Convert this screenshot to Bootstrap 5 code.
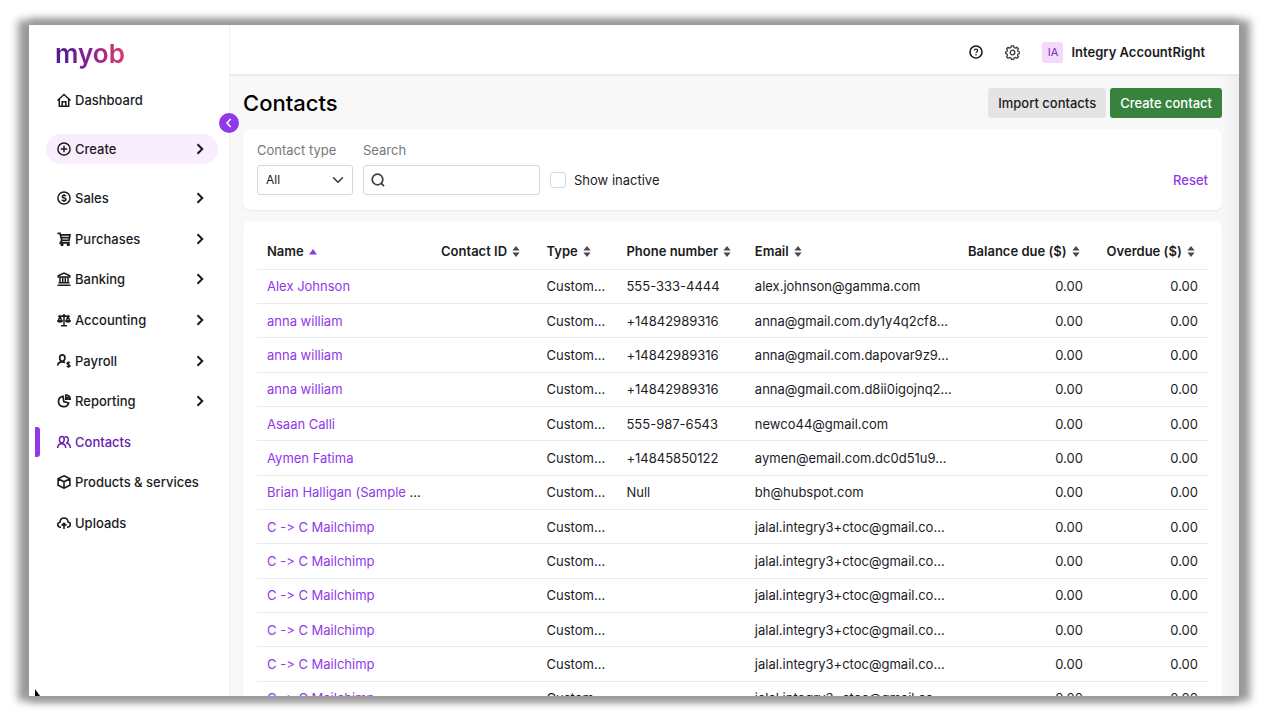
<!DOCTYPE html>
<html lang="en">
<head>
<meta charset="utf-8">
<meta name="viewport" content="width=device-width, initial-scale=1">
<title>Contacts - MYOB</title>
<link href="https://cdn.jsdelivr.net/npm/bootstrap@5.3.0/dist/css/bootstrap.min.css" rel="stylesheet">
<style>
  :root { --purple: #9138e8; --ink: #1b1b1f; --line: #ebebed; }
  body { font-family: Inter, "Liberation Sans", sans-serif; font-size: 13px; line-height: 20px; font-variant-ligatures: none; color: var(--ink); background: #fff; overflow: hidden; }
  .app-window { height: calc(100vh - 49px); margin: 25px 27px 24px 29px; background: #fff; position: relative;
    box-shadow: -6px 0 8px 5px #999, 6px 0 8px 5px #999; }
  a { text-decoration: none; }
  svg { flex: none; }

  /* sidebar */
  .side { width: 200px; flex: none; position: relative; }
  .brand { height: 60px; padding: 12px 0 0 26px; font-size: 26px; line-height: 34px; font-weight: 600; }
  .brand a { display: inline-block; color: transparent; background: linear-gradient(90deg, #4a1a94, #8c1f94 50%, #e23a6c); -webkit-background-clip: text; background-clip: text; }
  .side-link { display: flex; align-items: center; gap: 4px; width: 100%; height: 30px; padding: 0 14px 0 11px; border: 0; background: none; color: var(--ink); font-weight: 500; position: relative; text-align: left; }
  .side-link .arrow { margin-left: auto; }
  .side-body { padding: 0 11px 0 17px; }
  .create { background: #f8eefe; border-radius: 15px; margin: 19px 0 14px; }
  .menu { height: 365px; }
  .menu li { display: flex; align-items: center; flex: 1 1 0; }
  .side-link.active { color: #6620b0; }
  .side-link.active::before { content: ""; position: absolute; left: -11px; top: 0; width: 5px; height: 30px; background: var(--purple); border-radius: 0 3px 3px 0; }
  .collapse-btn { position: absolute; right: -10px; top: 88px; width: 20px; height: 20px; padding: 0; border: 0; border-radius: 50%; background: var(--purple); color: #fff; display: grid; place-items: center; z-index: 2; }
  .pointer { position: absolute; left: 6px; bottom: 0; }

  /* main area */
  .content { background: linear-gradient(90deg, #f8f8f8 calc(100% - 17px), #eee); border-left: 1px solid #f1f1f2; min-width: 0; }
  .topbar { height: 50px; padding: 5px 34px 0 0; background: #fff; border-bottom: 1px solid #e9e9ea; box-shadow: 0 1px 2px #0000000d; }
  .icon-btn { display: grid; place-items: center; width: 15px; height: 20px; margin-right: 22px; padding: 0; border: 0; background: none; color: var(--ink); }
  .avatar { width: 21px; height: 21px; border-radius: 3px; background: #f3dafb; color: #7a30b8; font-size: 11px; display: grid; place-items: center; }
  .page { padding: 13px 17px 0 13px; }
  .page h1 { font-size: 22px; line-height: 30px; font-weight: 500; color: #000; }
  .act { height: 30px; padding: 0 10px; border: 0; border-radius: 3px; font-size: 13px; line-height: 30px; font-weight: 500; }
  .act-grey, .act-grey:hover { background: #e4e4e4; color: var(--ink); }
  .act-green, .act-green:hover { background: #37833d; color: #fff; }
  .panel { background: #fff; border-radius: 7px; box-shadow: 0 1px 2px #00000012; margin-top: 11px; padding: 14px; }
  .panel label { color: #77777c; }
  .filters { padding: 11px 14px 15px; gap: 10px; }
  .filters label { display: block; margin-bottom: 5px; }
  .field, .field:focus { height: 30px; padding: 0 8px; border: 1px solid #d6d6d9; border-radius: 3px; font-size: 12px; line-height: 20px; color: var(--ink); box-shadow: none; }
  .type-field { width: 96px; background-size: 12px 12px; background-position: right 8px center; }
  .search-box { width: 177px; position: relative; }
  .search-box .field { width: 100%; padding-left: 28px; }
  .search-box svg { position: absolute; left: 8px; top: 8px; }
  .tick { height: 30px; }
  .tick .form-check-input { width: 16px; height: 16px; margin: 0; border-color: #d6d6d9; }
  .filters .tick label { margin: 0; color: var(--ink); }
  .purple, .purple:hover { color: var(--purple); }
  .reset { height: 30px; padding: 0; border: 0; background: none; font-weight: 500; }

  /* contact list */
  .list-panel { padding: 13px 14px; }
  .contacts { table-layout: fixed; width: 100%; height: 482px; margin: 0; color: var(--ink); }
  .contacts th, .contacts td { padding: 0 10px; border-bottom: 1px solid var(--line); white-space: nowrap; vertical-align: middle; }
  .contacts th { height: 35px; font-weight: 600; }
  .contacts th svg { margin: -2px 0 0 2px; }
  .contacts .num { text-align: right; }
  .contacts th.num { padding-right: 13px; }
  .c-name { width: 18.3%; } .c-id { width: 11.1%; } .c-type { width: 8.4%; } .c-phone { width: 13.5%; }
  .c-email { width: 22.1%; } .c-bal { width: 14.5%; } .c-over { width: 12.1%; }
</style>
</head>
<body>
<svg width="0" height="0" class="position-absolute" aria-hidden="true">
  <symbol id="arrow" viewBox="0 0 8 12"><path d="M1.5 1.2 6.3 6l-4.8 4.8" fill="none" stroke="currentColor" stroke-width="2"/></symbol>
  <symbol id="sort" viewBox="0 0 8 12"><path d="M4 0 8 5H0zM4 12 0 7h8z" fill="#4a4a50"/></symbol>
</svg>

<div class="app-window d-flex">
  <nav class="side" aria-label="Main">
    <div class="brand"><a href="#">myob</a></div>
    <div class="side-body">
      <a class="side-link" href="#"><svg width="14" height="14" viewBox="0 0 14 14" fill="none" stroke="currentColor" stroke-width="1.5"><path d="M.5 7.500 7 1.500 13.500 7.500M2.300 6.200v7h9.400v-7M5.200 13V8.800h3.600V13"/></svg>Dashboard</a>
      <button class="side-link create" type="button"><svg width="14" height="14" viewBox="0 0 14 14" fill="none" stroke="currentColor" stroke-width="1.5"><circle cx="7" cy="7" r="6.1"/><path d="M7 3.7v6.6M3.7 7h6.6"/></svg>Create<svg class="arrow" width="8" height="12"><use href="#arrow"/></svg></button>
      <ul class="menu list-unstyled d-flex flex-column mb-0">
        <li><button class="side-link" type="button"><svg width="14" height="14" viewBox="0 0 14 14" fill="none" stroke="currentColor" stroke-width="1.5"><circle cx="7" cy="7" r="6.1"/><path d="M9 5.1C8.600 4.300 5.200 3.900 5.200 5.700S9 6.700 9 8.400 5.400 9.800 4.900 8.700M7 3v1.500M7 9.500V11" stroke-width="1.500"/></svg>Sales<svg class="arrow" width="8" height="12"><use href="#arrow"/></svg></button></li>
        <li><button class="side-link" type="button"><svg width="14" height="14" viewBox="0 0 14 14" fill="none" stroke="currentColor" stroke-width="1.700"><path d="M.5 1.300H3L4.800 8.300H12l1-5.500H3.500M4.500 5.600h7.800M4.700 8.500 3.300 10.800H12.800"/><circle cx="5" cy="12.600" r=".8"/><circle cx="11.300" cy="12.600" r=".8"/></svg>Purchases<svg class="arrow" width="8" height="12"><use href="#arrow"/></svg></button></li>
        <li><button class="side-link" type="button"><svg width="14" height="14" viewBox="0 0 14 14" fill="none" stroke="currentColor" stroke-width="1.500"><path d="M1.200 5V3.700L7 1l5.800 2.700V5zM3 5.500v5M5.700 5.500v5M8.300 5.500v5M11 5.500v5M1.500 10.800h11M.5 13.200h13"/></svg>Banking<svg class="arrow" width="8" height="12"><use href="#arrow"/></svg></button></li>
        <li><button class="side-link" type="button"><svg width="14" height="14" viewBox="0 0 14 14" fill="none" stroke="currentColor" stroke-width="1.500"><path d="M7 1v11.500M4 12.700h6M1.200 3.300h3.300L7 2.500l2.500.8h3.300M3 3.300 1.200 8h3.600zM11 3.300 9.200 8h3.600z"/><path d="M.2 7.200h5.600a2.800 2.500 0 0 1-5.600 0zM8.200 7.200h5.600a2.800 2.500 0 0 1-5.600 0z" fill="currentColor" stroke="none"/></svg>Accounting<svg class="arrow" width="8" height="12"><use href="#arrow"/></svg></button></li>
        <li><button class="side-link" type="button"><svg width="14" height="14" viewBox="0 0 14 14" fill="none" stroke="currentColor" stroke-width="1.700"><path d="M.8 11.500c0-2.600 1.700-3.700 4.400-3.700 1.200 0 2.100.2 2.800.7M5.200 7.500C1.700 6.500 2 .9 5.300.9s3.700 5.500-.1 6.600z"/><path d="M13 8.900c-.7-.8-3-.8-3 .6s3 .8 3 2.200-2.500 1.500-3.200.5M11.500 7.500v6.300" stroke-width="1.400"/></svg>Payroll<svg class="arrow" width="8" height="12"><use href="#arrow"/></svg></button></li>
        <li><button class="side-link" type="button"><svg width="14" height="14" viewBox="0 0 14 14" fill="none" stroke="currentColor" stroke-width="1.700"><path d="M6 2.300A5.200 5.200 0 1 0 11.700 9L6.800 7.500z"/><path d="M8.800 1v4.200h4.400A4.300 4.300 0 0 0 8.800 1zM9 5l2.700-2.600"/></svg>Reporting<svg class="arrow" width="8" height="12"><use href="#arrow"/></svg></button></li>
        <li><a class="side-link active" href="#" aria-current="page"><svg width="14" height="14" viewBox="0 0 14 14" fill="none" stroke="currentColor" stroke-width="1.500"><path d="M.7 13c0-2.800 1.300-4.300 4-4.300s4 1.500 4 4.300M4.700 8.200C1.500 7 1.900 1.600 4.900 1.600s3.200 5.400-.2 6.600zM7.600 2c4-1.800 5 4.700 1.700 6.200 2.700.1 4 2 4 4.800"/></svg>Contacts</a></li>
        <li><a class="side-link" href="#"><svg width="14" height="14" viewBox="0 0 14 14" fill="none" stroke="currentColor" stroke-width="1.600"><path d="M7 .8l5.900 3v6.400L7 13.200l-5.900-3V3.800zM1.500 4 7 6.800 12.500 4M7 6.800V13"/></svg>Products &amp; services</a></li>
        <li><a class="side-link" href="#"><svg width="14" height="14" viewBox="0 0 14 14" fill="none" stroke="currentColor" stroke-width="1.600"><path d="M4 11.200C0 11.500-.3 6.600 3 6.200 3.300.4 10.800.7 11 6c3.500.6 2.900 5.300-1 5.200M7 13V7.500M4.600 9.600 7 7.300l2.400 2.300"/></svg>Uploads</a></li>
      </ul>
    </div>
    <button class="collapse-btn" type="button" aria-label="Collapse menu"><svg width="8" height="10" viewBox="0 0 8 10" fill="none" stroke="currentColor" stroke-width="1.600"><path d="M5.700 1 2 5l3.700 4"/></svg></button>
    <svg class="pointer" width="5" height="7" viewBox="0 0 5 7"><path d="M0 0v7h5z" fill="#000"/></svg>
  </nav>

  <div class="content flex-fill overflow-hidden">
    <header class="topbar d-flex align-items-center justify-content-end">
      <button class="icon-btn" type="button" aria-label="Help"><svg width="14" height="14" viewBox="0 0 14 14" fill="none" stroke="currentColor" stroke-width="1.600"><circle cx="7" cy="7" r="6"/><path d="M5.300 5.500c.1-2 3.400-1.900 3.400 0C8.700 6.700 7 6.700 7 8.100M7 9v1.400" stroke-width="1.200"/></svg></button>
      <button class="icon-btn" type="button" aria-label="Settings"><svg width="15" height="15" viewBox="0 0 15 15" fill="none" stroke="#3b3b40" stroke-width="1.300"><path d="M6.400.8h2.200l.5 1.700 1.200.5 1.600-.8 1.500 1.500-.8 1.600.5 1.200 1.700.5v1.500l-1.700.5-.5 1.200.8 1.600-1.500 1.500-1.600-.8-1.200.5-.5 1.300H6.400l-.5-1.300-1.200-.5-1.600.8-1.500-1.500.8-1.600L1.900 9 .7 8.500V7l1.200-.5.5-1.200-.8-1.600 1.500-1.500 1.600.8 1.200-.5z"/><circle cx="7.500" cy="7.500" r="2.300"/></svg></button>
      <span class="avatar me-2">IA</span>
      <span class="fw-semibold">Integry AccountRight</span>
    </header>

    <main class="page">
      <div class="d-flex align-items-center">
        <h1 class="mb-0 me-auto">Contacts</h1>
        <button class="btn act act-grey" type="button">Import contacts</button>
        <button class="btn act act-green ms-1" type="button">Create contact</button>
      </div>

      <form class="panel filters d-flex align-items-end">
        <div>
          <label for="type">Contact type</label>
          <select id="type" class="form-select field type-field"><option>All</option></select>
        </div>
        <div>
          <label for="search">Search</label>
          <div class="search-box">
            <input id="search" type="text" class="form-control field">
            <svg width="14" height="14" viewBox="0 0 14 14" fill="none" stroke="#3b3b40" stroke-width="1.700"><circle cx="6.500" cy="6.500" r="5.300"/><path d="m9.800 9.800 3.200 3.400"/></svg>
          </div>
        </div>
        <div class="tick d-flex align-items-center gap-2">
          <input class="form-check-input" type="checkbox" id="inactive">
          <label for="inactive">Show inactive</label>
        </div>
        <button class="reset purple ms-auto" type="reset">Reset</button>
      </form>

      <section class="panel list-panel">
        <table class="contacts">
          <thead><tr>
            <th class="c-name" scope="col">Name <svg width="8" height="6" viewBox="0 0 8 6"><path d="M4 0l4 5.500H0z" fill="#9138e8"/></svg></th>
            <th class="c-id" scope="col">Contact ID <svg width="8" height="11"><use href="#sort"/></svg></th>
            <th class="c-type" scope="col">Type <svg width="8" height="11"><use href="#sort"/></svg></th>
            <th class="c-phone" scope="col">Phone number <svg width="8" height="11"><use href="#sort"/></svg></th>
            <th class="c-email" scope="col">Email <svg width="8" height="11"><use href="#sort"/></svg></th>
            <th class="c-bal num" scope="col">Balance due ($) <svg width="8" height="11"><use href="#sort"/></svg></th>
            <th class="c-over num" scope="col">Overdue ($) <svg width="8" height="11"><use href="#sort"/></svg></th>
          </tr></thead>
          <tbody>
            <tr><td><a class="purple" href="#">Alex Johnson</a></td><td></td><td>Custom...</td><td>555-333-4444</td><td>alex.johnson@gamma.com</td><td class="num">0.00</td><td class="num">0.00</td></tr>
            <tr><td><a class="purple" href="#">anna william</a></td><td></td><td>Custom...</td><td>+14842989316</td><td>anna@gmail.com.dy1y4q2cf8...</td><td class="num">0.00</td><td class="num">0.00</td></tr>
            <tr><td><a class="purple" href="#">anna william</a></td><td></td><td>Custom...</td><td>+14842989316</td><td>anna@gmail.com.dapovar9z9...</td><td class="num">0.00</td><td class="num">0.00</td></tr>
            <tr><td><a class="purple" href="#">anna william</a></td><td></td><td>Custom...</td><td>+14842989316</td><td>anna@gmail.com.d8ii0igojnq2...</td><td class="num">0.00</td><td class="num">0.00</td></tr>
            <tr><td><a class="purple" href="#">Asaan Calli</a></td><td></td><td>Custom...</td><td>555-987-6543</td><td>newco44@gmail.com</td><td class="num">0.00</td><td class="num">0.00</td></tr>
            <tr><td><a class="purple" href="#">Aymen Fatima</a></td><td></td><td>Custom...</td><td>+14845850122</td><td>aymen@email.com.dc0d51u9...</td><td class="num">0.00</td><td class="num">0.00</td></tr>
            <tr><td><a class="purple" href="#">Brian Halligan (Sample</a> ...</td><td></td><td>Custom...</td><td>Null</td><td>bh@hubspot.com</td><td class="num">0.00</td><td class="num">0.00</td></tr>
            <tr><td><a class="purple" href="#">C -&gt; C Mailchimp</a></td><td></td><td>Custom...</td><td></td><td>jalal.integry3+ctoc@gmail.co...</td><td class="num">0.00</td><td class="num">0.00</td></tr>
            <tr><td><a class="purple" href="#">C -&gt; C Mailchimp</a></td><td></td><td>Custom...</td><td></td><td>jalal.integry3+ctoc@gmail.co...</td><td class="num">0.00</td><td class="num">0.00</td></tr>
            <tr><td><a class="purple" href="#">C -&gt; C Mailchimp</a></td><td></td><td>Custom...</td><td></td><td>jalal.integry3+ctoc@gmail.co...</td><td class="num">0.00</td><td class="num">0.00</td></tr>
            <tr><td><a class="purple" href="#">C -&gt; C Mailchimp</a></td><td></td><td>Custom...</td><td></td><td>jalal.integry3+ctoc@gmail.co...</td><td class="num">0.00</td><td class="num">0.00</td></tr>
            <tr><td><a class="purple" href="#">C -&gt; C Mailchimp</a></td><td></td><td>Custom...</td><td></td><td>jalal.integry3+ctoc@gmail.co...</td><td class="num">0.00</td><td class="num">0.00</td></tr>
            <tr><td><a class="purple" href="#">C -&gt; C Mailchimp</a></td><td></td><td>Custom...</td><td></td><td>jalal.integry3+ctoc@gmail.co...</td><td class="num">0.00</td><td class="num">0.00</td></tr>
          </tbody>
        </table>
      </section>
    </main>
  </div>
</div>
<script src="https://cdn.jsdelivr.net/npm/bootstrap@5.3.0/dist/js/bootstrap.bundle.min.js"></script>
</body>
</html>
